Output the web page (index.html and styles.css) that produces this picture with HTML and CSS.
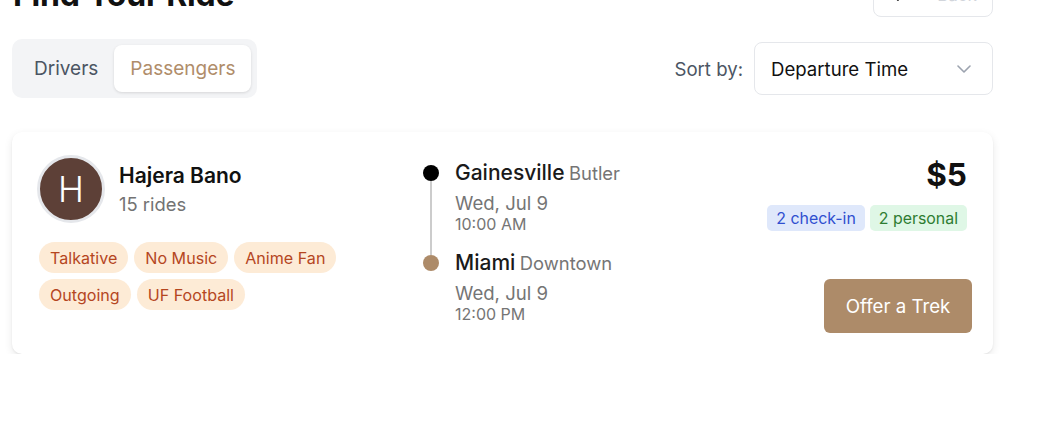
FILE: index.html
```html
<!DOCTYPE html>
<html lang="en">
<head>
<meta charset="utf-8">
<title>Find Your Ride</title>
<link rel="stylesheet" href="styles.css">
</head>
<body>
<div class="page">
  <header class="top">
    <h1 class="title">Find Your Ride</h1>
    <button class="back-btn">
      <svg width="18" height="18" viewBox="0 0 24 24" fill="none" stroke="#111" stroke-width="2" stroke-linecap="round" stroke-linejoin="round"><path d="M19 12H5"/><path d="M12 19l-7-7 7-7"/></svg>
      <span>Back</span>
    </button>
  </header>

  <div class="controls">
    <div class="tabs">
      <button class="tab">Drivers</button>
      <button class="tab active">Passengers</button>
    </div>
    <div class="sort">
      <span class="sort-label">Sort by:</span>
      <div class="select">
        <span>Departure Time</span>
        <svg width="14" height="8" viewBox="0 0 14 8" fill="none" stroke="#9ca3af" stroke-width="1.6" stroke-linecap="round" stroke-linejoin="round"><path d="M1 1l6 6 6-6"/></svg>
      </div>
    </div>
  </div>

  <article class="card">
    <div class="person">
      <div class="profile">
        <div class="avatar">H</div>
        <div class="who">
          <div class="name">Hajera Bano</div>
          <div class="rides">15 rides</div>
        </div>
      </div>
      <div class="tags">
        <span class="tag">Talkative</span>
        <span class="tag">No Music</span>
        <span class="tag">Anime Fan</span>
        <span class="tag">Outgoing</span>
        <span class="tag">UF Football</span>
      </div>
    </div>

    <div class="route">
      <div class="stop">
        <div class="marker"><span class="dot dot-start"></span><span class="line"></span></div>
        <div class="stop-info">
          <div class="place"><span class="city">Gainesville</span> <span class="area">Butler</span></div>
          <div class="date">Wed, Jul 9</div>
          <div class="time">10:00 AM</div>
        </div>
      </div>
      <div class="stop stop-last">
        <div class="marker"><span class="dot dot-end"></span></div>
        <div class="stop-info">
          <div class="place"><span class="city">Miami</span> <span class="area">Downtown</span></div>
          <div class="date">Wed, Jul 9</div>
          <div class="time">12:00 PM</div>
        </div>
      </div>
    </div>

    <div class="side">
      <div class="pricing">
        <div class="price">$5</div>
        <div class="badges">
          <span class="badge badge-blue">2 check-in</span>
          <span class="badge badge-green">2 personal</span>
        </div>
      </div>
      <button class="offer">Offer a Trek</button>
    </div>
  </article>
</div>
</body>
</html>
```

FILE: styles.css
```css
* { box-sizing: border-box; }

html, body {
  margin: 0;
  padding: 0;
  background: #ffffff;
  font-family: Inter, "Noto Sans", "Liberation Sans", sans-serif;
  color: #111111;
  overflow: hidden;
}

.page {
  width: 981px;
  margin: -27px 0 0 12px;
}

.top {
  display: flex;
  justify-content: space-between;
  align-items: center;
  height: 44px;
}

.title {
  margin: 0;
  font-size: 32px;
  font-weight: 700;
  line-height: 44px;
  letter-spacing: -0.2px;
  padding-left: 1px;
}

.back-btn {
  width: 120px;
  height: 44px;
  border: 1px solid #e5e7eb;
  border-radius: 8px;
  background: #fff;
  display: flex;
  align-items: center;
  justify-content: center;
  gap: 30px;
  font-family: inherit;
  font-size: 17px;
  color: #d1d5db;
}

.controls {
  margin-top: 22px;
  display: flex;
  justify-content: space-between;
  align-items: center;
}

.tabs {
  display: flex;
  background: #f3f4f6;
  border-radius: 10px;
  padding: 6px;
}

.tab {
  border: none;
  background: transparent;
  font-family: inherit;
  font-size: 19px;
  color: #4b5563;
  height: 47px;
  padding: 0 16px;
  border-radius: 8px;
}

.tab.active {
  background: #fff;
  color: #b08d6a;
  box-shadow: 0 1px 3px rgba(0,0,0,0.12);
}

.sort {
  display: flex;
  align-items: center;
  gap: 11px;
}

.sort-label {
  font-size: 18.6px;
  color: #4b5563;
}

.select {
  width: 239px;
  height: 53px;
  border: 1px solid #e5e7eb;
  border-radius: 8px;
  display: flex;
  align-items: center;
  justify-content: space-between;
  padding: 0 21px 0 16px;
  font-size: 18.6px;
  color: #111;
}

.card {
  margin-top: 34px;
  background: #fff;
  border-radius: 10px;
  box-shadow: 0 1px 2px rgba(0,0,0,0.06), 0 3px 8px rgba(0,0,0,0.09);
  padding: 23px 21px 21px 25px;
  display: grid;
  grid-template-columns: 386px 1fr auto;
}

.profile {
  display: flex;
  align-items: center;
  gap: 14px;
}

.avatar {
  width: 68px;
  height: 68px;
  border-radius: 50%;
  background: #5d4037;
  border: 3px solid #e5e7eb;
  color: #fff;
  font-size: 35px;
  font-weight: 300;
  display: flex;
  align-items: center;
  justify-content: center;
}

.who {
  display: flex;
  flex-direction: column;
  gap: 3px;
}

.name {
  font-size: 21px;
  line-height: 26px;
  font-weight: 600;
  color: #111;
}

.rides {
  font-size: 18.4px;
  line-height: 24px;
  color: #737373;
}

.tags {
  margin-top: 19px;
  margin-left: 2px;
  display: flex;
  flex-wrap: wrap;
  gap: 6px;
  max-width: 310px;
}

.tag {
  height: 31px;
  display: inline-flex;
  align-items: center;
  padding: 0 11px;
  border-radius: 16px;
  background: #fdebd6;
  color: #b5461f;
  font-size: 16.1px;
}

.route {
  display: flex;
  flex-direction: column;
  padding-top: 6px;
}

.stop {
  display: flex;
  gap: 16px;
  height: 90px;
}

.stop-last { height: auto; }

.marker {
  width: 16px;
  padding-top: 4px;
  display: flex;
  flex-direction: column;
  align-items: center;
}

.dot {
  width: 16px;
  height: 16px;
  border-radius: 50%;
  flex: none;
}

.dot-start { background: #000; }
.dot-end { background: #ad8b69; }

.line {
  width: 2px;
  flex: 1;
  margin-bottom: -4px;
  background: #cccccc;
}

.place { line-height: 24px; white-space: nowrap; }

.city {
  font-size: 21px;
  font-weight: 500;
  color: #1a1a1a;
}

.area {
  font-size: 18.4px;
  color: #757575;
}

.date {
  margin-top: 6px;
  font-size: 18.6px;
  line-height: 22px;
  color: #757575;
}

.time {
  margin-top: 1px;
  font-size: 16px;
  line-height: 18px;
  color: #757575;
}

.side {
  min-height: 178px;
  display: flex;
  flex-direction: column;
  align-items: flex-end;
  justify-content: space-between;
}

.pricing {
  display: flex;
  flex-direction: column;
  align-items: flex-end;
  margin-right: 5px;
}

.price {
  font-size: 31.5px;
  font-weight: 700;
  line-height: 40px;
  color: #111;
}

.badges {
  margin-top: 10px;
  display: flex;
  gap: 5px;
}

.badge {
  height: 26px;
  display: inline-flex;
  align-items: center;
  padding: 0 9px;
  border-radius: 5px;
  font-size: 15.9px;
}

.badge-blue { background: #dfe8fb; color: #2f4fd0; }
.badge-green { background: #dff7e6; color: #2e7d32; }

.offer {
  width: 148px;
  height: 54px;
  border: none;
  border-radius: 6px;
  background: #ad8b69;
  color: #fff;
  font-family: inherit;
  font-size: 18.7px;
}
```
